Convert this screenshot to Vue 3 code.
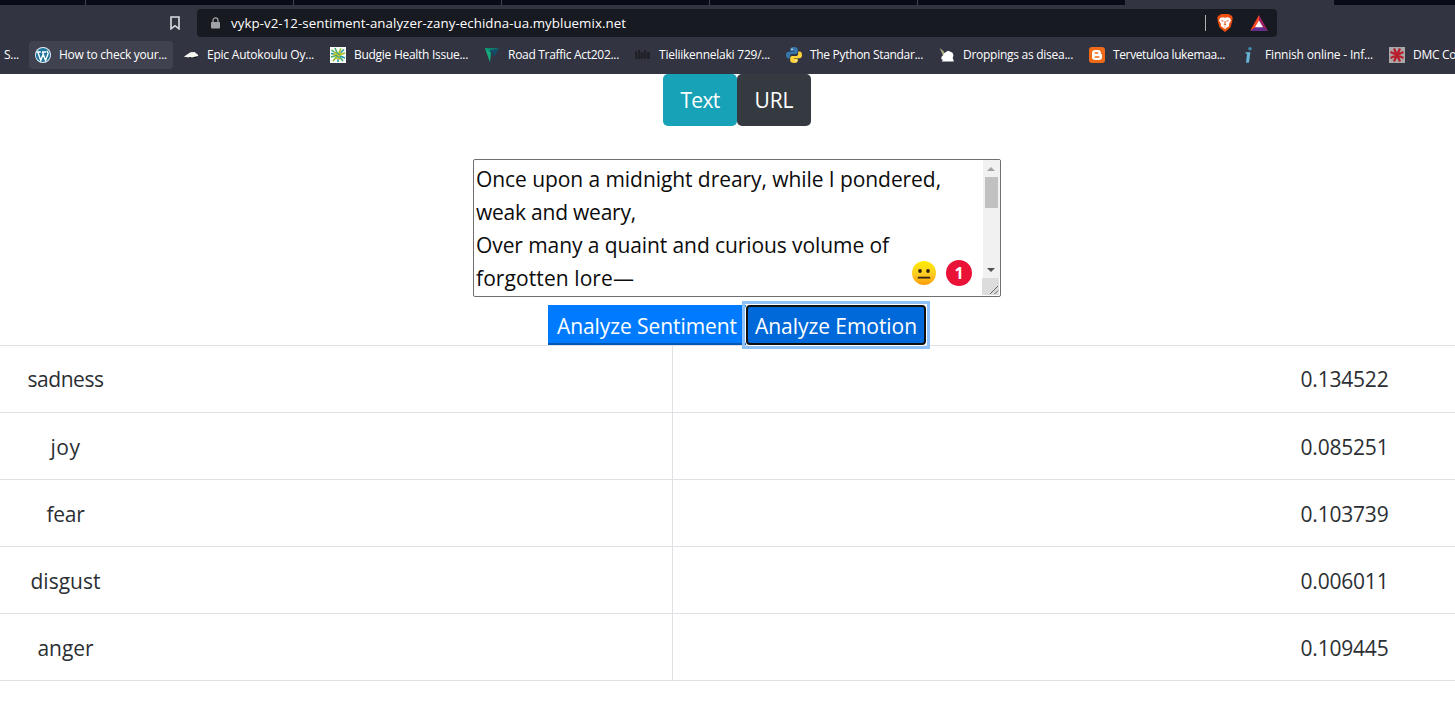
<script setup>
const bookmarks = [
  { icon: 'wordpress', label: 'How to check your...', width: 108, active: true },
  { icon: 'car', label: 'Epic Autokoulu Oy...', width: 107 },
  { icon: 'budgie', label: 'Budgie Health Issue...', width: 114 },
  { icon: 'road', label: 'Road Traffic Act202...', width: 111 },
  { icon: 'law', label: 'Tieliikennelaki 729/...', width: 111 },
  { icon: 'python', label: 'The Python Standar...', width: 113 },
  { icon: 'bird', label: 'Droppings as disea...', width: 110 },
  { icon: 'blogger', label: 'Tervetuloa lukemaa...', width: 112 },
  { icon: 'info', label: 'Finnish online - Inf...', width: 108 },
  { icon: 'dmc', label: 'DMC Co', width: 43 },
]

const poem = [
  { text: 'Once upon a midnight dreary, while I pondered,', width: 465 },
  { text: 'weak and weary,', width: 160 },
  { text: 'Over many a quaint and curious volume of', width: 413 },
  { text: 'forgotten lore—', width: 158 },
]

const emotions = [
  { name: 'sadness', score: '0.134522', width: 76 },
  { name: 'joy', score: '0.085251', width: 30 },
  { name: 'fear', score: '0.103739', width: 38 },
  { name: 'disgust', score: '0.006011', width: 70 },
  { name: 'anger', score: '0.109445', width: 56 },
]

// Tracks a single-line label so that it fills the given width.
const vFit = {
  mounted(el, { value }) {
    const natural = el.getBoundingClientRect().width
    el.style.letterSpacing = `${(value - natural) / el.textContent.length}px`
  },
}
</script>

<template>
  <div class="window">
    <header class="chrome">
      <div class="tabs">
        <i class="tab first"></i><i v-for="n in 5" :key="n" class="tab"></i>
        <i class="tab current"></i><i class="tab rest"></i>
      </div>
      <div class="toolbar">
        <svg class="mark" viewBox="0 0 10 14"><path d="M1 1h8v11.8L5 9.7 1 12.800z" fill="none" stroke="#dcdde2" stroke-width="1.6" /></svg>
        <div class="address">
          <svg class="lock" viewBox="0 0 9 12"><path d="M2 6V3.400a2.500 2.500 0 0 1 5 0V6" fill="none" stroke="#a0a2a6" stroke-width="1.300" /><rect x="0" y="5" width="9" height="6.500" rx="1" fill="#a0a2a6" /></svg>
          <span v-fit="395" class="fit url">vykp-v2-12-sentiment-analyzer-zany-echidna-ua.mybluemix.net</span>
          <i class="divider"></i>
          <svg class="brave" viewBox="0 0 16 18">
            <path d="M4 0h8l1.500 1.600h1.300l1 2.600-.6 1.500.2 1-2 6.700L8 18l-5.400-4.600-2-6.700.2-1-.6-1.500 1-2.600h1.300z" fill="#f0500f" />
            <path d="M3 4l2.600-.8L8 3.800l2.400-.6L13 4l1 2.500-2 3.500.2 2L8 15l-4.200-3 .2-2-2-3.500z" fill="#fff" />
            <path d="M4.200 6l2.600.9-.8.9L4.600 7zM11.800 6l-2.600.9.8.9 1.400-.8zM7.600 7h.8l.2 3.300h1L8 11.600l-1.600-1.300h1zM6.800 12.800h2.400l-1.200.6z" fill="#e74912" />
          </svg>
          <svg class="bat" viewBox="0 0 18 16"><path d="M9 0L0 16 9 10z" fill="#ff4724" /><path d="M9 0l9 16-9-6z" fill="#9e1f63" /><path d="M0 16h18l-9-6z" fill="#662d91" /><path d="M9 5.500L5 12.300h8z" fill="#fff" /></svg>
        </div>
      </div>
      <nav class="bookmarks">
        <span class="bookmark lead"><span v-fit="15" class="fit">S...</span></span>
        <span v-for="b in bookmarks" :key="b.label" class="bookmark" :class="{ active: b.active }">
          <svg class="favicon" viewBox="0 0 16 16">
            <g v-if="b.icon === 'wordpress'">
              <circle cx="8" cy="8" r="8" fill="#e8f4f8" /><circle cx="8" cy="8" r="7.100" fill="#21759b" />
              <path d="M1.800 5h4M7 5h4.200M2.800 5l3 8.500L8.200 7M7.500 5l3 8.500L13 7c.4-1.500-.8-2-.8-3.300" fill="none" stroke="#fff" stroke-width="1.400" />
            </g>
            <g v-else-if="b.icon === 'car'">
              <path d="M3 11h10l1.500-2H5z" fill="#17181b" /><path d="M.8 9.700L4.500 7.200l3-2 4-.2L14 7l1.200 1-.2 1-3 .8-3 .7-2-.5-2 .6-2-.6z" fill="#f8f8f3" />
            </g>
            <g v-else-if="b.icon === 'budgie'">
              <path d="M0 0h16v16H0z" fill="#f7faf6" />
              <g fill="none" stroke-width="1.500"><path d="M8 8L1.500 3M8 8L5 1M8 8L1 10M8 8L13 14" stroke="#42a96b" /><path d="M8 8L11 1.500M8 8L15 6M8 8L3 14" stroke="#8ab929" /><path d="M8 8L14 2.500M8 8L8 15M8 8L1 6.500M8 8L15 11" stroke="#1d97a5" /><path d="M4 5l5 4 4-3M6 11l4 1M3 8l3-1M10 4v3" stroke="#c5c72c" /></g>
            </g>
            <g v-else-if="b.icon === 'road'">
              <path d="M1 1l5 14V5L15 1.500z" fill="#0a9278" /><path d="M6 3l9-1.500-4 7H7.500l1.200-2.700H6z" fill="#144d69" /><path d="M1 1l5 14 1-9z" fill="#19aa7b" /><path d="M7 6h3L7 10z" fill="#25394c" />
            </g>
            <g v-else-if="b.icon === 'law'">
              <path d="M0 4h2v8H0zM3 3h2v9H3zM6 5h2v7H6zM9 3h2v9H9zM12 5h3v7h-3z" fill="#202127" /><path d="M0 6h15v5H0z" fill="#222329" opacity=".7" />
            </g>
            <g v-else-if="b.icon === 'python'">
              <path d="M7.900 0C5 0 4.200 1 4.200 2.500v1.700H8.200v.6H2.400C.8 4.800 0 6.200 0 8c0 2 .8 3.500 2.400 3.500h1.400V9.300c0-1.400 1.100-2.400 2.500-2.400h3.500c1.200 0 2-.9 2-2.100V2.500C11.800 1 10.600 0 7.900 0z" fill="#3776ab" />
              <path d="M8.100 16c2.900 0 3.700-1 3.700-2.500v-1.700h-4v-.6h5.800C15.200 11.200 16 9.800 16 8c0-2-.8-3.500-2.400-3.500h-1.400v2.200c0 1.400-1.100 2.400-2.500 2.400H6.200c-1.200 0-2 .9-2 2.100v2.300C4.200 15 5.400 16 8.100 16z" fill="#ffd43b" />
              <circle cx="6" cy="2.200" r=".8" fill="#fff" /><circle cx="10" cy="13.800" r=".8" fill="#fff" />
            </g>
            <g v-else-if="b.icon === 'bird'">
              <path d="M.5 1l4 3 1.500 3-2 2-1.500-4z" fill="#aaa981" /><path d="M5 6.500l1.500-1.200L9 3.800l2 .6 2.500 1.400 1 2.500-.8 2.700.8 2 .3 1.500H2.500l1.500-1.500-1.800-1 .5-2.500L4 8.500z" fill="#fff" />
            </g>
            <g v-else-if="b.icon === 'blogger'">
              <rect width="16" height="16" rx="3" fill="#f06b18" /><path d="M6.500 3H9a3 3 0 0 1 2.900 3c0 .9.3 1.200 1.100 1.200v2.600A3.200 3.200 0 0 1 9.800 13H6.300A3.200 3.200 0 0 1 3 9.800V6.300A3.300 3.300 0 0 1 6.500 3z" fill="#fff" /><path d="M6.200 6h2.500M6.200 10h3.700" stroke="#f06b18" stroke-width="1.500" stroke-linecap="round" />
            </g>
            <g v-else-if="b.icon === 'info'"><circle cx="9" cy="1.800" r="1.800" fill="#3b8eae" /><path d="M4.500 5.300h4.800L8.200 14.500l-.7 1.300H5L6 7l-1.500-.7z" fill="#66b5d6" /></g>
            <g v-else>
              <path d="M0 0h16v16H0z" fill="#aaa7a6" /><path d="M8 8L5 1.500M8 8l3-6.500M8 8l6.500-3M8 8l6.500 3M8 8l3 6.500M8 8l-3 6.500M8 8l-6.500 3M8 8L1.500 5" stroke="#b81e2e" stroke-width="2.300" />
            </g>
          </svg>
          <span v-fit="b.width" class="fit">{{ b.label }}</span>
        </span>
      </nav>
    </header>

    <main class="page">
      <div class="modes">
        <button class="mode text"><span v-fit="39" class="fit">Text</span></button>
        <button class="mode link"><span v-fit="39" class="fit">URL</span></button>
      </div>

      <div class="editor">
        <div class="lines">
          <div v-for="l in poem" :key="l.text" class="line"><span v-fit="l.width" class="fit">{{ l.text }}</span></div>
        </div>
        <svg class="scroll" viewBox="0 0 18 136">
          <path d="M1 0h17v118H1z" fill="#f1f1f1" /><path d="M3 17h13v31H3z" fill="#c1c1c1" />
          <path d="M5 11l4-4 4 4z" fill="#a3a3a3" /><path d="M5 108h8l-4 4z" fill="#505050" />
          <path d="M0 118h17v17H0z" fill="#dcdcdc" /><path d="M8 134l8-8M12.500 134l3.500-3.500" stroke="#666" fill="none" />
        </svg>
        <div class="badges">
          <svg class="face" viewBox="0 0 24 24">
            <defs><linearGradient id="glow" x1="0" y1="0" x2="0" y2="1"><stop offset="0" stop-color="#ffec00" /><stop offset=".5" stop-color="#fdd024" /><stop offset="1" stop-color="#ff9c0b" /></linearGradient></defs>
            <circle cx="12" cy="12" r="12" fill="url(#glow)" /><ellipse cx="8" cy="9.900" rx="1.800" ry="2" fill="#30200c" /><ellipse cx="16" cy="9.900" rx="1.800" ry="2" fill="#30200c" /><path d="M6.500 16.700h11" stroke="#30200c" stroke-width="1.700" stroke-linecap="round" />
          </svg>
          <span class="count">1</span>
        </div>
      </div>

      <div class="actions">
        <button class="action sentiment"><span v-fit="180" class="fit">Analyze Sentiment</span></button>
        <button class="action emotion"><span v-fit="162" class="fit">Analyze Emotion</span></button>
      </div>

      <section class="results">
        <div v-for="e in emotions" :key="e.name" class="row">
          <div class="cell"><div class="name"><span v-fit="e.width" class="fit">{{ e.name }}</span></div></div>
          <div class="cell end"><div class="score"><span v-fit="88" class="fit">{{ e.score }}</span></div></div>
        </div>
      </section>
    </main>
  </div>
</template>

<style>
body { margin: 0; background: #fff; overflow: hidden; }
</style>

<style scoped>
.window { width: 1455px; height: 705px; overflow: hidden; background: #fff; font-family: "Open Sans", "Noto Sans", sans-serif; }
.fit { display: inline-block; white-space: nowrap; }
svg { display: block; flex: none; }
.chrome { height: 74px; background: #323442; color: #fff; overflow: hidden; }
.tabs { display: flex; height: 5px; }
.tab { box-sizing: border-box; flex: none; width: 208px; background: #090b16; border-left: 1px solid #414350; }
.tab.first { width: 85px; border: 0; }
.tab.current { width: 209px; background: #323442; border: 0; }
.tab.rest { width: 121px; border: 0; }
.toolbar { display: flex; padding-top: 4px; height: 28px; }
.mark { width: 10px; height: 14px; margin: 7px 17px 0 170px; }
.address { box-sizing: border-box; display: flex; align-items: center; width: 1080px; height: 28px; padding-left: 14px; background: #181a21; border-radius: 4px; }
.lock { width: 9px; height: 12px; }
.url { flex: none; margin-left: 11px; font-size: 13.3px; line-height: 28px; }
.divider { width: 1px; height: 16px; margin-left: 579px; background: #aeb0b5; }
.brave { width: 16px; height: 18px; margin-left: 11px; }
.bat { width: 18px; height: 16px; margin-left: 17px; }
.bookmarks { display: flex; gap: 4px; padding-top: 4px; font-size: 12px; line-height: 16px; width: 1700px; }
.bookmark { box-sizing: border-box; display: flex; align-items: center; flex: none; gap: 8px; height: 28px; padding: 0 6px; border-radius: 4px; }
.bookmark .fit { margin-bottom: 1px; }
.bookmark.lead { width: 25px; padding: 0 0 0 4px; }
.bookmark.active { background: #404250; }
.favicon { width: 16px; height: 16px; }
.page { color: #2b2f33; font-size: 21px; line-height: 33px; }
button { box-sizing: border-box; padding: 0; border: 0; color: #fff; font: inherit; text-align: center; }
.modes { display: flex; margin-left: 663px; }
.mode { width: 74px; height: 52px; border-radius: 5px; }
.mode.text { background: #17a2b8; }
.mode.link { background: #343a40; }
.editor { box-sizing: border-box; position: relative; display: flex; justify-content: space-between; width: 528px; height: 138px; margin: 33px 0 0 473px; border: 1px solid #707070; border-radius: 2px; background: #fff; color: #0c0c0c; }
.lines { padding: 3px 0 0 2px; }
.line { height: 33px; }
.scroll { width: 18px; height: 136px; }
.badges { position: absolute; right: 28px; bottom: 10px; display: flex; align-items: center; gap: 10px; }
.face { width: 24px; height: 24px; }
.count { width: 26px; height: 26px; border-radius: 50%; background: #eb1238; color: #fff; font-size: 16px; font-weight: 700; line-height: 26px; text-align: center; }
.actions { display: flex; box-sizing: border-box; height: 48px; padding-top: 8px; margin-left: 548px; }
.action { height: 40px; }
.sentiment { width: 198px; padding-top: 4px; background: #007bff; border-bottom: 2px solid #0056b3; }
.emotion { position: relative; z-index: 1; width: 180px; padding-top: 2px; border: 2px solid #101010; border-radius: 4px; background: #0069d9; box-shadow: 0 0 0 1px #fff; }
.emotion::before { content: ""; position: absolute; z-index: -1; inset: -6px; border: 3px solid #8fc2fb; }
.results { border-bottom: 1px solid #dee2e6; }
.row { display: flex; box-sizing: border-box; height: 67px; border-top: 1px solid #dee2e6; }
.cell { width: 672px; padding-top: 18px; box-sizing: border-box; }
.row:first-child .cell { padding-top: 17px; }
.cell.end { display: flex; justify-content: flex-end; flex: 1; border-left: 1px solid #dee2e6; }
.name { width: 131px; text-align: center; }
.score { width: 221px; text-align: center; }
</style>
